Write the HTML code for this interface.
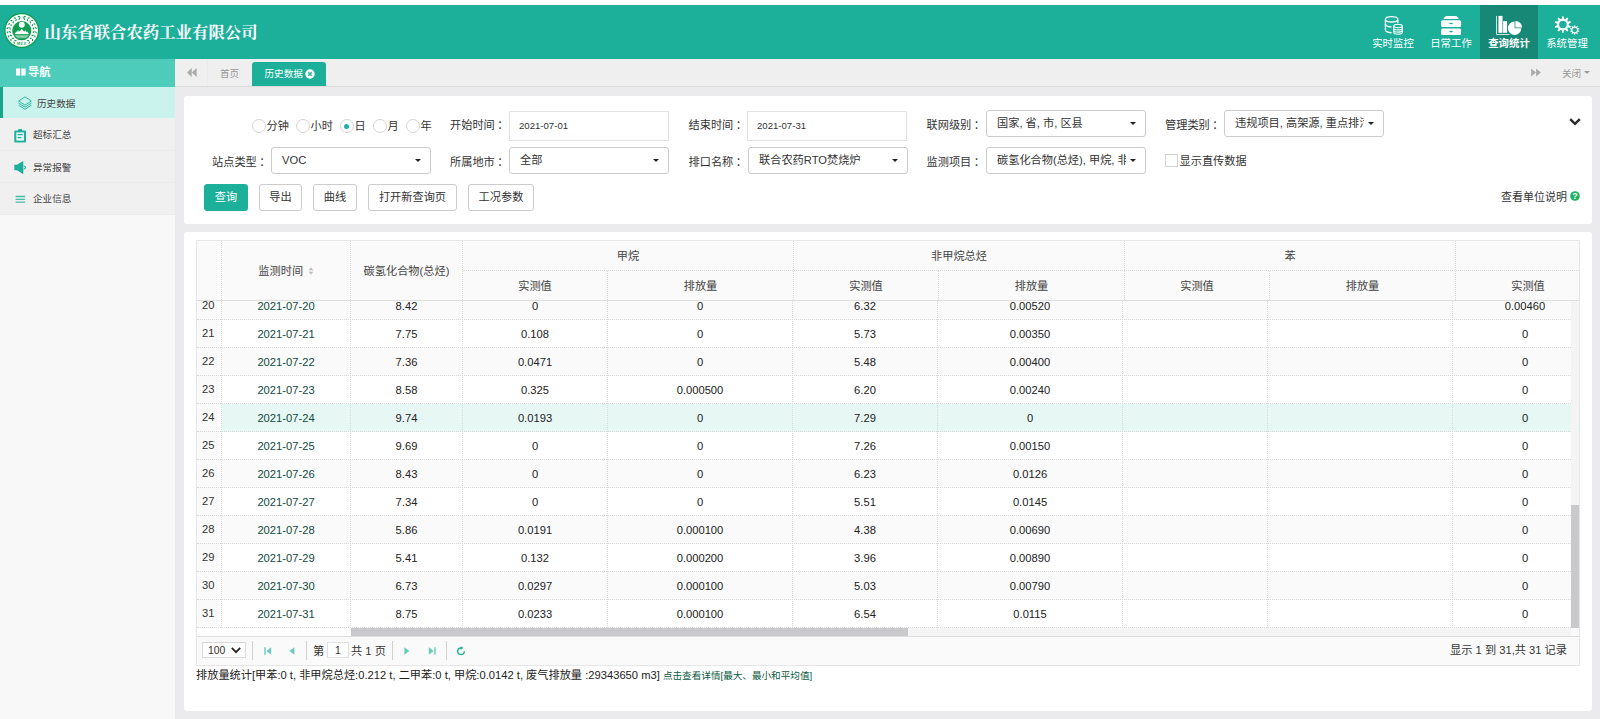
<!DOCTYPE html>
<html lang="zh-CN">
<head>
<meta charset="utf-8">
<title>山东省联合农药工业有限公司</title>
<style>
*{box-sizing:border-box;margin:0;padding:0}
html,body{width:1600px;height:719px;overflow:hidden;background:#fff}
body{position:relative;font-family:"Liberation Sans","Noto Sans CJK SC",sans-serif;font-size:9.6px;color:#333}
.abs{position:absolute}
#hdr{left:0;top:4.6px;width:1600px;height:54.4px;background:#1caf9a}
#title{left:44.5px;top:15px;height:26px;line-height:26px;font-family:"Liberation Serif","Noto Serif CJK SC",serif;font-weight:700;font-size:16.4px;color:#fff;white-space:nowrap}
.tn{top:0;width:58px;height:54px;color:#fff;text-align:center}
.tn svg{position:absolute;left:19px;top:10px;width:20px;height:20px}
.tn span{position:absolute;left:-10px;right:-10px;top:32.7px;font-size:10.4px;line-height:14px;white-space:nowrap}
.tn.on{background:#168875}
.tn.on span{font-weight:700}
#side{left:0;top:59px;width:175px;height:660px;background:#f8f8f8}
#sideh{left:0;top:0;width:175px;height:27.6px;background:#4dccbc;color:#fff;font-weight:700;font-size:11.2px;line-height:27.6px}
.si{left:0;width:175px;height:32px;background:#f0f0f0;border-bottom:1px solid #ececec;line-height:33px;font-size:9.6px;color:#444}
.si svg{position:absolute;left:14px;top:9px;width:13px;height:14px}
.si span{position:absolute;left:33px;top:0;white-space:nowrap}
.si.on{background:#c9f3ec;border-left:3px solid #18a689;border-bottom:none}
.si.on svg{left:15px}
.si.on span{left:34px}
#main{left:175px;top:59px;width:1425px;height:660px;background:#ebebed}
#tabs{left:0;top:0;width:1425px;height:28px;background:#efefef;border-bottom:1px solid #dcdcdc}
.p{background:#fff;border-radius:3px}
.lab{font-size:11.2px;line-height:16px;white-space:nowrap;color:#333}
.inp{height:30px;width:160px;border:1px solid #e2e2e2;background:#fff;font-size:9.6px;line-height:28px;padding-left:9px;color:#333}
.sel{height:27px;width:160px;border:1px solid #ccc;border-radius:3px;background:#fff;font-size:11.2px;line-height:24px;padding-left:10px;color:#333;white-space:nowrap;overflow:hidden}
.sel i{position:absolute;right:8.6px;top:10.8px;width:0;height:0;border-left:3.6px solid transparent;border-right:3.6px solid transparent;border-top:3.8px solid #222}
.btn{height:27px;border:1px solid #ccc;border-radius:3px;background:#fff;font-size:11.2px;line-height:25px;text-align:center;color:#333;white-space:nowrap}
.rad{width:14px;height:14px;border:1px solid #d4d4d4;border-radius:50%;background:#fff;margin:-0.6px 0 0 -0.3px}
.rl{font-size:11.2px;line-height:16px;white-space:nowrap}

#grid{left:196px;top:240px;width:1384px;height:426px;border:1px solid #e6e6e6;background:#fff;overflow:hidden;font-size:11.2px}
#grid .abs{position:absolute}
.vl{width:0;border-left:1px dotted #d9d9d9}
.hl{height:0;border-top:1px dotted #d9d9d9}
.ht{color:#444;text-align:center;white-space:nowrap;line-height:14px;height:14px}
.row{left:0;height:28px;width:1374px}
.row .c{position:absolute;top:0;height:28px;line-height:28px;text-align:center;color:#222;white-space:nowrap}
.row .n{left:0;width:22.5px;border-right:2.5px solid #fafafa;box-sizing:content-box;background:#fafafa;color:#333;line-height:26px}
.row .d{color:#114c40}
.alt{background:#fafafa}
.hov{background:#e6f7f4}
.pg{color:#333;line-height:14px;white-space:nowrap}
.lab b{font-weight:400;margin-left:2.5px}
</style>
</head>
<body>
<div id="hdr" class="abs">
  <svg class="abs" style="left:3px;top:7px;width:38px;height:38px" viewBox="0 0 38 38">
<circle cx="18.77" cy="18.53" r="17.5" fill="#0f9d4f"/>
<circle cx="18.77" cy="18.53" r="16.2" fill="#fff"/>
<g fill="#0f9d4f"><ellipse cx="11.19" cy="30.66" rx="1.25" ry="0.62" transform="rotate(250.0 11.19 30.66)"/><ellipse cx="12.46" cy="28.62" rx="1.25" ry="0.62" transform="rotate(174.0 12.46 28.62)"/><ellipse cx="7.98" cy="27.91" rx="1.25" ry="0.62" transform="rotate(267.0 7.98 27.91)"/><ellipse cx="9.79" cy="26.34" rx="1.25" ry="0.62" transform="rotate(191.0 9.79 26.34)"/><ellipse cx="5.71" cy="24.35" rx="1.25" ry="0.62" transform="rotate(284.0 5.71 24.35)"/><ellipse cx="7.90" cy="23.37" rx="1.25" ry="0.62" transform="rotate(208.0 7.90 23.37)"/><ellipse cx="4.58" cy="20.27" rx="1.25" ry="0.62" transform="rotate(301.0 4.58 20.27)"/><ellipse cx="6.96" cy="19.98" rx="1.25" ry="0.62" transform="rotate(225.0 6.96 19.98)"/><ellipse cx="4.69" cy="16.05" rx="1.25" ry="0.62" transform="rotate(318.0 4.69 16.05)"/><ellipse cx="7.05" cy="16.46" rx="1.25" ry="0.62" transform="rotate(242.0 7.05 16.46)"/><ellipse cx="6.03" cy="12.04" rx="1.25" ry="0.62" transform="rotate(335.0 6.03 12.04)"/><ellipse cx="8.17" cy="13.13" rx="1.25" ry="0.62" transform="rotate(259.0 8.17 13.13)"/><ellipse cx="8.48" cy="8.60" rx="1.25" ry="0.62" transform="rotate(352.0 8.48 8.60)"/><ellipse cx="10.21" cy="10.26" rx="1.25" ry="0.62" transform="rotate(276.0 10.21 10.26)"/><ellipse cx="11.84" cy="6.02" rx="1.25" ry="0.62" transform="rotate(369.0 11.84 6.02)"/><ellipse cx="13.00" cy="8.12" rx="1.25" ry="0.62" transform="rotate(293.0 13.00 8.12)"/><ellipse cx="15.80" cy="4.54" rx="1.25" ry="0.62" transform="rotate(386.0 15.80 4.54)"/><ellipse cx="16.30" cy="6.89" rx="1.25" ry="0.62" transform="rotate(310.0 16.30 6.89)"/><ellipse cx="26.35" cy="30.66" rx="1.25" ry="0.62" transform="rotate(-70.0 26.35 30.66)"/><ellipse cx="25.08" cy="28.62" rx="1.25" ry="0.62" transform="rotate(6.0 25.08 28.62)"/><ellipse cx="29.56" cy="27.91" rx="1.25" ry="0.62" transform="rotate(-87.0 29.56 27.91)"/><ellipse cx="27.75" cy="26.34" rx="1.25" ry="0.62" transform="rotate(-11.0 27.75 26.34)"/><ellipse cx="31.83" cy="24.35" rx="1.25" ry="0.62" transform="rotate(-104.0 31.83 24.35)"/><ellipse cx="29.64" cy="23.37" rx="1.25" ry="0.62" transform="rotate(-28.0 29.64 23.37)"/><ellipse cx="32.96" cy="20.27" rx="1.25" ry="0.62" transform="rotate(-121.0 32.96 20.27)"/><ellipse cx="30.58" cy="19.98" rx="1.25" ry="0.62" transform="rotate(-45.0 30.58 19.98)"/><ellipse cx="32.85" cy="16.05" rx="1.25" ry="0.62" transform="rotate(-138.0 32.85 16.05)"/><ellipse cx="30.49" cy="16.46" rx="1.25" ry="0.62" transform="rotate(-62.0 30.49 16.46)"/><ellipse cx="31.51" cy="12.04" rx="1.25" ry="0.62" transform="rotate(-155.0 31.51 12.04)"/><ellipse cx="29.37" cy="13.13" rx="1.25" ry="0.62" transform="rotate(-79.0 29.37 13.13)"/><ellipse cx="29.06" cy="8.60" rx="1.25" ry="0.62" transform="rotate(-172.0 29.06 8.60)"/><ellipse cx="27.33" cy="10.26" rx="1.25" ry="0.62" transform="rotate(-96.0 27.33 10.26)"/><ellipse cx="25.70" cy="6.02" rx="1.25" ry="0.62" transform="rotate(-189.0 25.70 6.02)"/><ellipse cx="24.54" cy="8.12" rx="1.25" ry="0.62" transform="rotate(-113.0 24.54 8.12)"/><ellipse cx="21.74" cy="4.54" rx="1.25" ry="0.62" transform="rotate(-206.0 21.74 4.54)"/><ellipse cx="21.24" cy="6.89" rx="1.25" ry="0.62" transform="rotate(-130.0 21.24 6.89)"/></g>
<path d="M15.6 5.2 H17.7 M19.9 5.2 H22" stroke="#0f9d4f" stroke-width=".8"/>
<circle cx="18.77" cy="18.7" r="9.6" fill="#0f9d4f"/>
<circle cx="18.77" cy="12.7" r="3" fill="#fff"/>
<path d="M11.6 21.9 L13.3 19.6 L14 20.2 L15 18.1 L15.9 19.5 L16.9 19.3 L18.77 16.8 L20.65 19.3 L21.6 19.5 L22.5 18.1 L23.5 20.2 L24.2 19.6 L25.9 21.9Z" fill="#fff"/>
<path d="M11.9 23.2 H25.6 M12.9 24.5 H24.6 M14.3 25.7 H23.2" stroke="#bfe6cf" stroke-width="0.75" fill="none"/>
<text x="18.77" y="32.6" font-family="Liberation Serif,serif" font-size="4.3" font-weight="700" font-style="italic" fill="#0f9d4f" text-anchor="middle" letter-spacing="0.35">MEE</text>
</svg>
<div id="title" class="abs">山东省联合农药工业有限公司</div>
<div class="abs tn" style="left:1364px"><svg viewBox="0 0 58 54" style="left:0;top:0;width:58px;height:54px"><g fill="none" stroke="#fff" stroke-width="1.35" stroke-opacity=".92">
<ellipse cx="27.6" cy="14.3" rx="6.2" ry="2.7"/>
<path d="M21.4 14.3 V24.9 A6.2 2.8 0 0 0 27.6 27.7 M33.8 14.3 V18.5"/>
<path d="M21.4 19 A6.2 2.9 0 0 0 27.6 21.9"/>
</g>
<path d="M29.7 21 A4.3 1.6 0 0 1 38.3 21 V27.6 A4.3 1.6 0 0 1 29.7 27.6Z" fill="#1caf9a" stroke="#1caf9a" stroke-width="3"/>
<g fill="none" stroke="#fff" stroke-width="1.15" stroke-opacity=".92">
<ellipse cx="34" cy="21" rx="4.3" ry="1.6"/>
<path d="M29.7 21 V27.6 A4.3 1.6 0 0 0 38.3 27.6 V21"/>
<path d="M29.7 23.3 A4.3 1.6 0 0 0 38.3 23.3 M29.7 25.5 A4.3 1.6 0 0 0 38.3 25.5"/>
</g></svg><span>实时监控</span></div>
<div class="abs tn" style="left:1422px"><svg viewBox="0 0 58 54" style="left:0;top:0;width:58px;height:54px"><g fill="#fff">
<path d="M24.6 10.9 H33.6 Q34.5 10.9 35.1 11.6 L36.9 13.9 H21.3 L23.1 11.6 Q23.7 10.9 24.6 10.9Z"/>
<path d="M20.5 15.2 H37.6 Q39.1 15.2 39.1 16.7 V20.5 Q39.1 22 37.6 22 H20.5 Q19 22 19 20.5 V16.7 Q19 15.2 20.5 15.2Z M27.2 18.5 A1.9 0.8 0 0 0 31 18.5 A1.9 0.8 0 0 0 27.2 18.5Z" fill-rule="evenodd"/>
<path d="M20.5 23.4 H37.6 Q39.1 23.4 39.1 24.9 V28.5 Q39.1 30 37.6 30 H20.5 Q19 30 19 28.5 V24.9 Q19 23.4 20.5 23.4Z M27.2 26.6 A1.9 0.8 0 0 0 31 26.6 A1.9 0.8 0 0 0 27.2 26.6Z" fill-rule="evenodd"/>
</g></svg><span>日常工作</span></div>
<div class="abs tn on" style="left:1480px"><svg viewBox="0 0 58 54" style="left:0;top:0;width:58px;height:54px">
<path d="M16.5 10.9 V29.5 H29.5" fill="none" stroke="#fff" stroke-width="1" stroke-opacity=".8"/>
<rect x="18.4" y="10.9" width="4.1" height="16.9" fill="#fff"/>
<rect x="23.1" y="16.15" width="4" height="11.65" fill="#fff"/>
<circle cx="34.6" cy="23.3" r="7.4" fill="#168875"/>
<path d="M34.6 23.3 H41.3 A6.7 6.7 0 1 1 34.6 16.6Z" fill="#fff"/>
<path d="M35.35 22.6 V15.9 A6.7 6.7 0 0 1 42.05 22.6Z" fill="#fff"/>
</svg><span>查询统计</span></div>
<div class="abs tn" style="left:1538px"><svg viewBox="0 0 58 54" style="left:0;top:0;width:58px;height:54px"><path fill="#fff" fill-rule="evenodd" d="M23.62 13.95 L24.25 11.23 L25.55 11.23 L26.18 13.95 L27.13 14.25 L29.24 12.42 L30.29 13.19 L29.20 15.76 L29.79 16.57 L32.57 16.32 L32.97 17.56 L30.58 19.00 L30.58 20.00 L32.97 21.44 L32.57 22.68 L29.79 22.43 L29.20 23.24 L30.29 25.81 L29.24 26.58 L27.13 24.75 L26.18 25.05 L25.55 27.77 L24.25 27.77 L23.62 25.05 L22.67 24.75 L20.56 26.58 L19.51 25.81 L20.60 23.24 L20.01 22.43 L17.23 22.68 L16.83 21.44 L19.22 20.00 L19.22 19.00 L16.83 17.56 L17.23 16.32 L20.01 16.57 L20.60 15.76 L19.51 13.19 L20.56 12.42 L22.67 14.25Z M21.10 19.50 a3.80 3.80 0 1 0 7.60 0 a3.80 3.80 0 1 0 -7.60 0Z"/><path fill="#fff" fill-rule="evenodd" d="M35.94 21.69 L36.32 20.21 L37.08 20.21 L37.46 21.69 L38.03 21.87 L39.21 20.91 L39.82 21.35 L39.26 22.77 L39.62 23.25 L41.13 23.16 L41.37 23.88 L40.09 24.70 L40.09 25.30 L41.37 26.12 L41.13 26.84 L39.62 26.75 L39.26 27.23 L39.82 28.65 L39.21 29.09 L38.03 28.13 L37.46 28.31 L37.08 29.79 L36.32 29.79 L35.94 28.31 L35.37 28.13 L34.19 29.09 L33.58 28.65 L34.14 27.23 L33.78 26.75 L32.27 26.84 L32.03 26.12 L33.31 25.30 L33.31 24.70 L32.03 23.88 L32.27 23.16 L33.78 23.25 L34.14 22.77 L33.58 21.35 L34.19 20.91 L35.37 21.87Z M34.40 25.00 a2.30 2.30 0 1 0 4.60 0 a2.30 2.30 0 1 0 -4.60 0Z"/></svg><span>系统管理</span></div>

</div>
<div id="side" class="abs">
  <div id="sideh" class="abs"><svg class="abs" style="left:16px;top:9px;width:10px;height:8px" viewBox="0 0 10 8"><rect x="0" y="0.5" width="4.1" height="7" fill="#fff"/><rect x="5.3" y="0.5" width="4.3" height="7" fill="#fff"/></svg><span class="abs" style="left:28px;top:0">导航</span></div>
<div class="abs si on" style="top:27.6px;height:31.4px"><svg viewBox="0 0 14 14" style="width:14px;height:14px;top:9px"><g fill="none" stroke="#2fb8a2" stroke-width="1" stroke-linejoin="round"><path d="M7 0.9 L13.4 5 L7 9.1 L0.6 5Z"/><path d="M0.6 7.1 L7 11.2 L13.4 7.1"/><path d="M0.6 9.2 L7 13.3 L13.4 9.2"/></g></svg><span>历史数据</span></div>
<div class="abs si" style="top:59px;height:33.2px;line-height:34px"><svg viewBox="0 0 13 14" style="top:10.7px"><path fill="#1caf9a" d="M1.3 1.6 H4.3 V0.6 Q4.3 0 4.9 0 H7.4 Q8 0 8 0.6 V1.6 H11 Q12 1.6 12 2.6 V12.4 Q12 13.4 11 13.4 H1.3 Q0.3 13.4 0.3 12.4 V2.6 Q0.3 1.6 1.3 1.6Z"/><rect x="2.3" y="3.4" width="7.7" height="8.2" fill="#e8f7f4"/><rect x="4" y="1.3" width="4.3" height="1.6" fill="#1caf9a"/><path d="M3.6 5.7 H8.7 M3.6 8.6 H7.4" stroke="#1caf9a" stroke-width="1.2"/></svg><span>超标汇总</span></div>
<div class="abs si" style="top:92.2px;height:32.2px"><svg viewBox="0 0 13 14" style="top:10px"><path fill="#1caf9a" d="M0.3 4.3 Q0.3 3.8 0.8 3.8 H3 L8.6 0.3 Q9.3 0 9.3 0.8 V12.3 Q9.3 13.1 8.6 12.8 L3 9.3 H0.8 Q0.3 9.3 0.3 8.8Z"/><path d="M9.6 5 Q11.5 5 11.5 6.6 Q11.5 8.2 9.6 8.2" fill="none" stroke="#1caf9a" stroke-width="1.1"/></svg><span>异常报警</span></div>
<div class="abs si" style="top:124.4px;height:32px;line-height:32px"><svg viewBox="0 0 13 14" style="top:8.6px"><path d="M1.6 4.5 H11.2 M1.6 7.4 H11.2 M1.6 10.2 H11.2" stroke="#45bfa9" stroke-width="1.3"/></svg><span>企业信息</span></div>
</div>
<div id="main" class="abs">
  <div id="tabs" class="abs">
<svg class="abs" style="left:12px;top:9px;width:10px;height:9px" viewBox="0 0 11 9" preserveAspectRatio="none"><path d="M5.2 0 V9 L0 4.5Z M10.6 0 V9 L5.4 4.5Z" fill="#a9a9ad"/></svg>
<div class="abs" style="left:32px;top:0;width:1px;height:27px;background:#ebebeb"></div>
<span class="abs" style="left:45px;top:8px;line-height:14px;color:#999">首页</span>
<div class="abs" style="left:77px;top:3px;width:74px;height:24px;background:#1caf9a;border-radius:3px 3px 0 0;color:#fff"><span class="abs" style="left:12.5px;top:5px;line-height:14px;white-space:nowrap">历史数据</span><svg class="abs" style="left:53px;top:7px;width:10px;height:10px" viewBox="0 0 10 10"><circle cx="5" cy="5" r="4.7" fill="#fff"/><path d="M3.3 3.3 L6.7 6.7 M6.7 3.3 L3.3 6.7" stroke="#1caf9a" stroke-width="1.4"/></svg></div>
<svg class="abs" style="left:1356px;top:9px;width:10px;height:9px" viewBox="0 0 11 9"><path d="M0.2 0 V9 L5.4 4.5Z M5.6 0 V9 L10.8 4.5Z" fill="#a9a9ad"/></svg>
<span class="abs" style="left:1387px;top:8px;line-height:14px;color:#999">关闭</span>
<i class="abs" style="left:1409px;top:12px;width:0;height:0;border-left:3.2px solid transparent;border-right:3.2px solid transparent;border-top:3.4px solid #999"></i>
</div>
  <div id="p1" class="abs p" style="left:9px;top:37px;width:1408px;height:128px">
<div class="abs rad" style="left:68.0px;top:24px"></div><span class="abs rl" style="left:82.5px;top:22px">分钟</span>
<div class="abs rad" style="left:112.3px;top:24px"></div><span class="abs rl" style="left:126.5px;top:22px">小时</span>
<div class="abs rad" style="left:156.0px;top:24px"><b class="abs" style="left:3.5px;top:3.5px;width:5px;height:5px;border-radius:50%;background:#1ab3a6"></b></div><span class="abs rl" style="left:170.5px;top:22px">日</span>
<div class="abs rad" style="left:189.4px;top:24px"></div><span class="abs rl" style="left:203.5px;top:22px">月</span>
<div class="abs rad" style="left:222.0px;top:24px"></div><span class="abs rl" style="left:236.5px;top:22px">年</span>
<span class="abs lab" style="left:266.0px;top:21.4px">开始时间<b>：</b></span>
<span class="abs lab" style="left:504.5px;top:21.4px">结束时间<b>：</b></span>
<span class="abs lab" style="left:742.5px;top:21.4px">联网级别<b>：</b></span>
<span class="abs lab" style="left:981.0px;top:21.4px">管理类别<b>：</b></span>
<span class="abs lab" style="left:28.0px;top:58.0px">站点类型<b>：</b></span>
<span class="abs lab" style="left:266.0px;top:58.0px">所属地市<b>：</b></span>
<span class="abs lab" style="left:504.5px;top:58.0px">排口名称<b>：</b></span>
<span class="abs lab" style="left:742.5px;top:58.0px">监测项目<b>：</b></span>
<div class="abs inp" style="left:325px;top:15px">2021-07-01</div>
<div class="abs inp" style="left:563px;top:15px">2021-07-31</div>
<div class="abs sel" style="left:802px;top:14px">国家, 省, 市, 区县<i></i></div>
<div class="abs sel" style="left:1040px;top:14px"><span style="display:inline-block;width:129px;overflow:hidden;vertical-align:top">违规项目, 高架源, 重点排污单位</span><i></i></div>
<div class="abs sel" style="left:87px;top:51px">VOC<i></i></div>
<div class="abs sel" style="left:325px;top:51px">全部<i></i></div>
<div class="abs sel" style="left:564px;top:51px">联合农药RTO焚烧炉<i></i></div>
<div class="abs sel" style="left:802px;top:51px"><span style="display:inline-block;width:129px;overflow:hidden;vertical-align:top">碳氢化合物(总烃), 甲烷, 非甲烷总烃</span><i></i></div>
<div class="abs" style="left:981px;top:58px;width:13px;height:13px;border:1px solid #d4d4d4;background:#fff"></div><span class="abs lab" style="left:995.5px;top:56.5px">显示直传数据</span>
<div class="abs btn" style="left:20px;top:88px;width:44px;background:#1caf9a;border-color:#1caf9a;color:#fff;">查询</div>
<div class="abs btn" style="left:75px;top:88px;width:43px;">导出</div>
<div class="abs btn" style="left:129px;top:88px;width:44px;">曲线</div>
<div class="abs btn" style="left:184px;top:88px;width:89px;">打开新查询页</div>
<div class="abs btn" style="left:284px;top:88px;width:66px;">工况参数</div>
<svg class="abs" style="left:1385px;top:22px;width:12px;height:8px" viewBox="0 0 12 8"><path d="M1.2 1.2 L6 5.8 L10.8 1.2" fill="none" stroke="#2a2a2a" stroke-width="2.5"/></svg>
<span class="abs" style="left:1317px;top:92px;font-size:11px;line-height:16px;white-space:nowrap;color:#333;margin-top:.5px">查看单位说明</span><svg class="abs" style="left:1386px;top:95px;width:10px;height:10px" viewBox="0 0 10 10"><circle cx="5" cy="5" r="4.8" fill="#1cb25e"/><text x="5" y="8.3" font-size="9" font-weight="700" fill="#fff" text-anchor="middle" font-family="Liberation Sans,sans-serif">?</text></svg>
</div>
  <div id="p2" class="abs p" style="left:9px;top:172.5px;width:1408px;height:479.5px"></div>
</div>
<div id="grid" class="abs">
<div class="abs" style="left:0;top:0;width:1382px;height:59px;background:#fafafa"></div>
<div class="abs" style="left:0;top:59px;width:1382px;height:1px;background:#dedede"></div>
<div class="abs vl" style="left:24px;top:0;height:59px"></div><div class="abs vl" style="left:153px;top:0;height:59px"></div><div class="abs vl" style="left:265px;top:0;height:59px"></div><div class="abs vl" style="left:410px;top:30px;height:29px"></div><div class="abs vl" style="left:596px;top:0;height:59px"></div><div class="abs vl" style="left:741px;top:30px;height:29px"></div><div class="abs vl" style="left:927px;top:0;height:59px"></div><div class="abs vl" style="left:1072px;top:30px;height:29px"></div><div class="abs vl" style="left:1258px;top:0;height:59px"></div>
<div class="abs hl" style="left:266px;top:29px;width:1116px"></div>
<div class="abs ht" style="left:25px;width:128px;top:22.5px">监测时间<svg style="display:inline-block;vertical-align:middle;margin-left:4.5px;margin-top:-1px;width:6px;height:8px" viewBox="0 0 5 8"><path d="M0 3.3 L2.5 0.3 L5 3.3Z M0 4.7 L2.5 7.7 L5 4.7Z" fill="#c0c0c0"/></svg></div>
<div class="abs ht" style="left:154px;width:111px;top:22.5px">碳氢化合物(总烃)</div>
<div class="abs ht" style="left:266px;width:330px;top:8.0px">甲烷</div>
<div class="abs ht" style="left:597px;width:330px;top:8.0px">非甲烷总烃</div>
<div class="abs ht" style="left:928px;width:330px;top:8.0px">苯</div>
<div class="abs ht" style="left:266px;width:144px;top:37.5px">实测值</div>
<div class="abs ht" style="left:411px;width:185px;top:37.5px">排放量</div>
<div class="abs ht" style="left:597px;width:144px;top:37.5px">实测值</div>
<div class="abs ht" style="left:742px;width:185px;top:37.5px">排放量</div>
<div class="abs ht" style="left:928px;width:144px;top:37.5px">实测值</div>
<div class="abs ht" style="left:1073px;width:185px;top:37.5px">排放量</div>
<div class="abs ht" style="left:1259px;width:144px;top:37.5px">实测值</div>
<div class="abs" style="left:0;top:60px;width:1374px;height:327px;overflow:hidden">
<div class="row abs alt" style="top:-9px"><div class="c n">20</div><div class="c d" style="left:25px;width:128px">2021-07-20</div><div class="c" style="left:154px;width:111px">8.42</div><div class="c" style="left:266px;width:144px">0</div><div class="c" style="left:411px;width:184px">0</div><div class="c" style="left:596px;width:144px">6.32</div><div class="c" style="left:741px;width:184px">0.00520</div><div class="c" style="left:926px;width:144px"></div><div class="c" style="left:1071px;width:184px"></div><div class="c" style="left:1256px;width:144px">0.00460</div><div class="abs hl" style="left:0;top:27px;width:1374px"></div></div>
<div class="row abs" style="top:19px"><div class="c n">21</div><div class="c d" style="left:25px;width:128px">2021-07-21</div><div class="c" style="left:154px;width:111px">7.75</div><div class="c" style="left:266px;width:144px">0.108</div><div class="c" style="left:411px;width:184px">0</div><div class="c" style="left:596px;width:144px">5.73</div><div class="c" style="left:741px;width:184px">0.00350</div><div class="c" style="left:926px;width:144px"></div><div class="c" style="left:1071px;width:184px"></div><div class="c" style="left:1256px;width:144px">0</div><div class="abs hl" style="left:0;top:27px;width:1374px"></div></div>
<div class="row abs alt" style="top:47px"><div class="c n">22</div><div class="c d" style="left:25px;width:128px">2021-07-22</div><div class="c" style="left:154px;width:111px">7.36</div><div class="c" style="left:266px;width:144px">0.0471</div><div class="c" style="left:411px;width:184px">0</div><div class="c" style="left:596px;width:144px">5.48</div><div class="c" style="left:741px;width:184px">0.00400</div><div class="c" style="left:926px;width:144px"></div><div class="c" style="left:1071px;width:184px"></div><div class="c" style="left:1256px;width:144px">0</div><div class="abs hl" style="left:0;top:27px;width:1374px"></div></div>
<div class="row abs" style="top:75px"><div class="c n">23</div><div class="c d" style="left:25px;width:128px">2021-07-23</div><div class="c" style="left:154px;width:111px">8.58</div><div class="c" style="left:266px;width:144px">0.325</div><div class="c" style="left:411px;width:184px">0.000500</div><div class="c" style="left:596px;width:144px">6.20</div><div class="c" style="left:741px;width:184px">0.00240</div><div class="c" style="left:926px;width:144px"></div><div class="c" style="left:1071px;width:184px"></div><div class="c" style="left:1256px;width:144px">0</div><div class="abs hl" style="left:0;top:27px;width:1374px"></div></div>
<div class="row abs hov" style="top:103px"><div class="c n">24</div><div class="c d" style="left:25px;width:128px">2021-07-24</div><div class="c" style="left:154px;width:111px">9.74</div><div class="c" style="left:266px;width:144px">0.0193</div><div class="c" style="left:411px;width:184px">0</div><div class="c" style="left:596px;width:144px">7.29</div><div class="c" style="left:741px;width:184px">0</div><div class="c" style="left:926px;width:144px"></div><div class="c" style="left:1071px;width:184px"></div><div class="c" style="left:1256px;width:144px">0</div><div class="abs hl" style="left:0;top:27px;width:1374px"></div></div>
<div class="row abs" style="top:131px"><div class="c n">25</div><div class="c d" style="left:25px;width:128px">2021-07-25</div><div class="c" style="left:154px;width:111px">9.69</div><div class="c" style="left:266px;width:144px">0</div><div class="c" style="left:411px;width:184px">0</div><div class="c" style="left:596px;width:144px">7.26</div><div class="c" style="left:741px;width:184px">0.00150</div><div class="c" style="left:926px;width:144px"></div><div class="c" style="left:1071px;width:184px"></div><div class="c" style="left:1256px;width:144px">0</div><div class="abs hl" style="left:0;top:27px;width:1374px"></div></div>
<div class="row abs alt" style="top:159px"><div class="c n">26</div><div class="c d" style="left:25px;width:128px">2021-07-26</div><div class="c" style="left:154px;width:111px">8.43</div><div class="c" style="left:266px;width:144px">0</div><div class="c" style="left:411px;width:184px">0</div><div class="c" style="left:596px;width:144px">6.23</div><div class="c" style="left:741px;width:184px">0.0126</div><div class="c" style="left:926px;width:144px"></div><div class="c" style="left:1071px;width:184px"></div><div class="c" style="left:1256px;width:144px">0</div><div class="abs hl" style="left:0;top:27px;width:1374px"></div></div>
<div class="row abs" style="top:187px"><div class="c n">27</div><div class="c d" style="left:25px;width:128px">2021-07-27</div><div class="c" style="left:154px;width:111px">7.34</div><div class="c" style="left:266px;width:144px">0</div><div class="c" style="left:411px;width:184px">0</div><div class="c" style="left:596px;width:144px">5.51</div><div class="c" style="left:741px;width:184px">0.0145</div><div class="c" style="left:926px;width:144px"></div><div class="c" style="left:1071px;width:184px"></div><div class="c" style="left:1256px;width:144px">0</div><div class="abs hl" style="left:0;top:27px;width:1374px"></div></div>
<div class="row abs alt" style="top:215px"><div class="c n">28</div><div class="c d" style="left:25px;width:128px">2021-07-28</div><div class="c" style="left:154px;width:111px">5.86</div><div class="c" style="left:266px;width:144px">0.0191</div><div class="c" style="left:411px;width:184px">0.000100</div><div class="c" style="left:596px;width:144px">4.38</div><div class="c" style="left:741px;width:184px">0.00690</div><div class="c" style="left:926px;width:144px"></div><div class="c" style="left:1071px;width:184px"></div><div class="c" style="left:1256px;width:144px">0</div><div class="abs hl" style="left:0;top:27px;width:1374px"></div></div>
<div class="row abs" style="top:243px"><div class="c n">29</div><div class="c d" style="left:25px;width:128px">2021-07-29</div><div class="c" style="left:154px;width:111px">5.41</div><div class="c" style="left:266px;width:144px">0.132</div><div class="c" style="left:411px;width:184px">0.000200</div><div class="c" style="left:596px;width:144px">3.96</div><div class="c" style="left:741px;width:184px">0.00890</div><div class="c" style="left:926px;width:144px"></div><div class="c" style="left:1071px;width:184px"></div><div class="c" style="left:1256px;width:144px">0</div><div class="abs hl" style="left:0;top:27px;width:1374px"></div></div>
<div class="row abs alt" style="top:271px"><div class="c n">30</div><div class="c d" style="left:25px;width:128px">2021-07-30</div><div class="c" style="left:154px;width:111px">6.73</div><div class="c" style="left:266px;width:144px">0.0297</div><div class="c" style="left:411px;width:184px">0.000100</div><div class="c" style="left:596px;width:144px">5.03</div><div class="c" style="left:741px;width:184px">0.00790</div><div class="c" style="left:926px;width:144px"></div><div class="c" style="left:1071px;width:184px"></div><div class="c" style="left:1256px;width:144px">0</div><div class="abs hl" style="left:0;top:27px;width:1374px"></div></div>
<div class="row abs" style="top:299px"><div class="c n">31</div><div class="c d" style="left:25px;width:128px">2021-07-31</div><div class="c" style="left:154px;width:111px">8.75</div><div class="c" style="left:266px;width:144px">0.0233</div><div class="c" style="left:411px;width:184px">0.000100</div><div class="c" style="left:596px;width:144px">6.54</div><div class="c" style="left:741px;width:184px">0.0115</div><div class="c" style="left:926px;width:144px"></div><div class="c" style="left:1071px;width:184px"></div><div class="c" style="left:1256px;width:144px">0</div><div class="abs hl" style="left:0;top:27px;width:1374px"></div></div>
<div class="abs vl" style="left:24px;top:0;height:327px"></div><div class="abs vl" style="left:153px;top:0;height:327px"></div><div class="abs vl" style="left:265px;top:0;height:327px"></div><div class="abs vl" style="left:410px;top:0;height:327px"></div><div class="abs vl" style="left:595px;top:0;height:327px"></div><div class="abs vl" style="left:740px;top:0;height:327px"></div><div class="abs vl" style="left:925px;top:0;height:327px"></div><div class="abs vl" style="left:1070px;top:0;height:327px"></div><div class="abs vl" style="left:1255px;top:0;height:327px"></div></div>
<div class="abs" style="left:1374px;top:60px;width:9px;height:327px;background:#f4f4f4"></div><div class="abs" style="left:1374px;top:264px;width:8px;height:123px;background:#c9c9cb"></div>
<div class="abs" style="left:154px;top:387px;width:1220px;height:8px;background:#f4f4f4"></div><div class="abs" style="left:154px;top:387px;width:557px;height:8px;background:#c9c9cb"></div>
<div class="abs" style="left:1374px;top:387px;width:9px;height:9px;background:#fafafa"></div>
<div class="abs" style="left:0;top:395px;width:1382px;height:29px;background:#fafafa;border-top:1px solid #dedede"></div>
<div class="abs" style="left:5px;top:401px;width:44px;height:16px;border:1px solid #d9d9d9;background:#fff"><span class="abs pg" style="left:5px;top:1px;font-size:10.4px">100</span><svg class="abs" style="left:27.5px;top:4px;width:10px;height:7px" viewBox="0 0 10 7"><path d="M0.8 0.8 L5 5.2 L9.2 0.8" fill="none" stroke="#222" stroke-width="1.7"/></svg></div>
<div class="abs" style="left:55px;top:400px;width:1px;height:19px;background:#d0d0d0"></div><div class="abs" style="left:109px;top:400px;width:1px;height:19px;background:#d0d0d0"></div><div class="abs" style="left:195px;top:400px;width:1px;height:19px;background:#d0d0d0"></div><div class="abs" style="left:249px;top:400px;width:1px;height:19px;background:#d0d0d0"></div>
<svg class="abs" style="left:67px;top:406px;width:8px;height:8px" viewBox="0 0 8 8"><path d="M0.3 0.3 H1.7 V7.7 H0.3Z M7.2 0.3 V7.7 L2.4 4Z" fill="#6acab8"/></svg><svg class="abs" style="left:91px;top:406px;width:8px;height:8px" viewBox="0 0 8 8"><path d="M6.4 0.3 V7.7 L1.4 4Z" fill="#6acab8"/></svg><svg class="abs" style="left:206px;top:406px;width:8px;height:8px" viewBox="0 0 8 8"><path d="M1.4 0.3 V7.7 L6.4 4Z" fill="#6acab8"/></svg><svg class="abs" style="left:231px;top:406px;width:8px;height:8px" viewBox="0 0 8 8"><path d="M6.3 0.3 H7.7 V7.7 H6.3Z M0.8 0.3 V7.7 L5.6 4Z" fill="#6acab8"/></svg><svg class="abs" style="left:259px;top:405px;width:10px;height:10px" viewBox="0 0 10 10"><path d="M5 1.9 A3.3 3.3 0 1 0 8.3 5.2" fill="none" stroke="#2ab39b" stroke-width="1.5"/><path d="M4.6 0 L7.4 2 L4.6 4Z" fill="#2ab39b"/></svg>
<span class="abs pg" style="left:116px;top:403px;font-size:11.2px">第</span><div class="abs" style="left:130px;top:401px;width:22px;height:16px;border:1px solid #e0e0e0;background:#fff;text-align:center;line-height:16px;font-size:10.4px">1</div><span class="abs pg" style="left:154px;top:403px;font-size:11.2px">共 1 页</span>
<span class="abs pg" style="right:12px;top:402px;font-size:11.2px">显示 1 到 31,共 31 记录</span>
</div>
<div class="abs" style="left:196px;top:667px;font-size:11.2px;line-height:16px;color:#222;white-space:nowrap">排放量统计[甲苯:0 t, 非甲烷总烃:0.212 t, 二甲苯:0 t, 甲烷:0.0142 t, 废气排放量 :29343650 m3] <span style="font-size:9.6px;color:#0b5a3e">点击查看详情[最大、最小和平均值]</span></div>
</body>
</html>
